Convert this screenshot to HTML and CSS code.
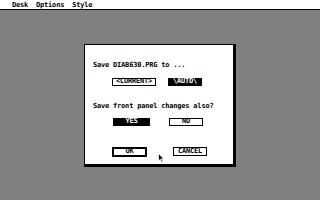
FILE: index.html
```html
<!DOCTYPE html>
<html>
<head>
<meta charset="utf-8">
<title>Save panel</title>
<link rel="stylesheet" href="styles.css">
</head>
<body>
<div class="screen">
  <div class="menubar"><span>Desk</span><span>Options</span><span>Style</span></div>
  <div class="desktop">
    <div class="dialog">
      <p class="msg">Save DIAB630.PRG to ...</p>
      <div class="row row-dest">
        <span class="btn w-current">&lt;CURRENT&gt;</span>
        <span class="btn sel w-auto">\AUTO\</span>
      </div>
      <p class="msg q">Save front panel changes also?</p>
      <div class="row row-yn">
        <span class="btn sel w-yes">YES</span>
        <span class="btn w-no">NO</span>
      </div>
      <div class="row row-exit">
        <span class="btn default w-ok">OK</span>
        <span class="btn w-cancel">CANCEL</span>
      </div>
      <svg class="pointer" width="7" height="10" viewBox="0 0 7 10">
        <path d="M0.5 0.5 L0.5 8 L2.3 6.2 L3.6 9.2 L4.8 8.7 L3.6 5.8 L6 5.8 Z" fill="#000" stroke="#fff" stroke-width="0.8"/>
      </svg>
    </div>
  </div>
</div>
</body>
</html>
```
FILE: styles.css
```css
html, body {
  margin: 0;
  padding: 0;
}
body {
  width: 320px;
  height: 200px;
  overflow: hidden;
  font-family: "DejaVu Sans Mono", "Liberation Mono", monospace;
  font-size: 7px;
  font-weight: bold;
  letter-spacing: -0.2px;
  color: #000;
}
.screen {
  width: 320px;
  height: 200px;
  display: flex;
  flex-direction: column;
  background: #808080;
}
.menubar {
  height: 9px;
  line-height: 10px;
  background: #fff;
  border-bottom: 1px solid #000;
  display: flex;
  gap: 8px;
  padding-left: 12px;
}
.desktop {
  flex: 1;
  display: flex;
  align-items: center;
  justify-content: center;
}
.dialog {
  position: relative;
  box-sizing: border-box;
  width: 152px;
  height: 123px;
  background: #fff;
  border: 1px solid #000;
  border-right-width: 3px;
  border-bottom-width: 3px;
  padding: 16px 0 0 8px;
}
.msg {
  margin: 0;
  height: 8px;
  line-height: 8px;
  white-space: pre;
}
.q {
  margin-top: 16px;
}
.row {
  display: flex;
  align-items: center;
}
.row-dest {
  margin: 9px 0 0 19px;
  gap: 12px;
}
.row-yn {
  margin: 8px 0 0 20px;
  gap: 19px;
}
.row-exit {
  margin: 21px 0 0 19px;
  gap: 26px;
}
.btn {
  box-sizing: border-box;
  height: 8px;
  border: 1px solid #000;
  background: #fff;
  display: flex;
  align-items: center;
  justify-content: center;
  line-height: 1;
}
.sel {
  background: #000;
  color: #fff;
}
.default {
  height: 10px;
  border-width: 2px;
}
.w-current { width: 44px; }
.w-auto { width: 34px; }
.w-yes { width: 37px; }
.w-no { width: 34px; }
.w-ok { width: 35px; }
.w-cancel { width: 34px; height: 9px; }
.pointer {
  position: absolute;
  left: 73px;
  top: 108px;
}
```
